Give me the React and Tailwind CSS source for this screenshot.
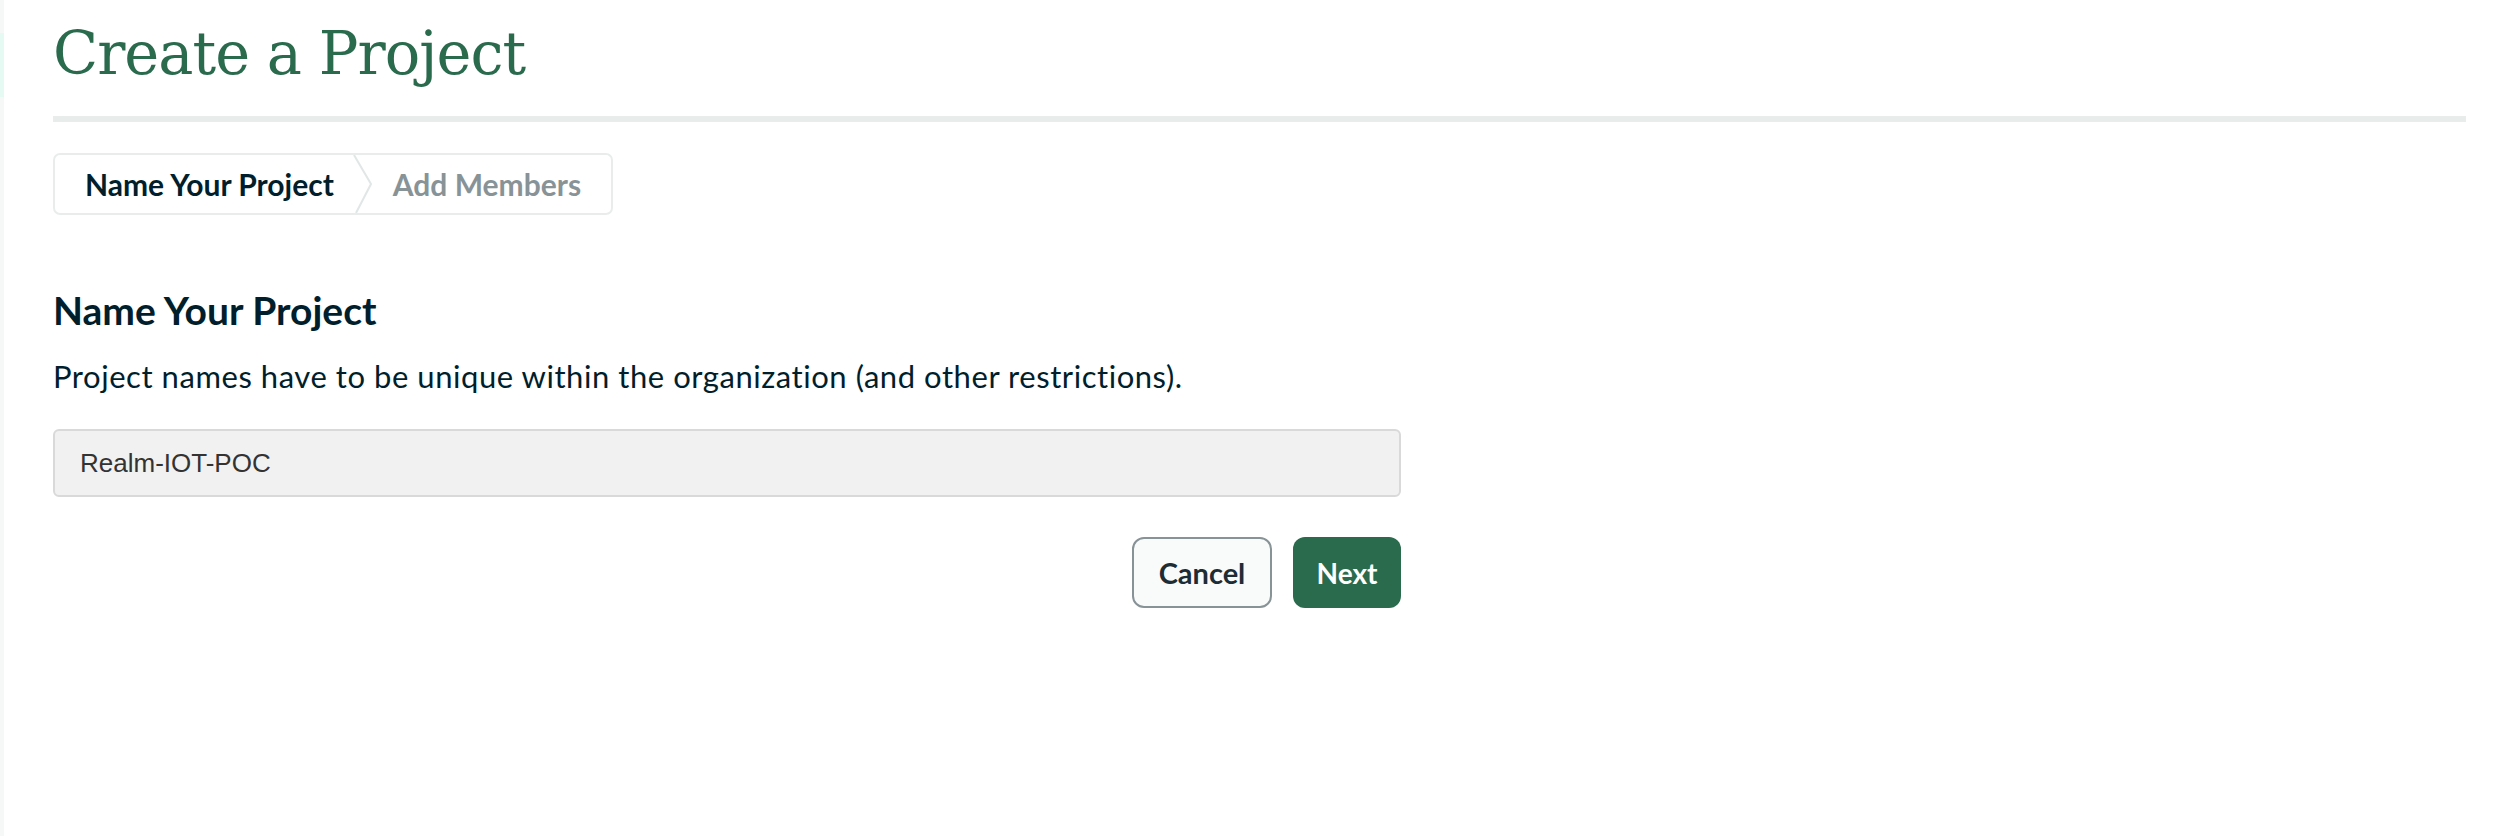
import React from "react";

export default function App() {
  return (
    <div className="flex min-h-[836px] w-full bg-white">
      <div className="flex w-[4px] shrink-0 flex-col">
        <div className="h-[33px] bg-[#f6f8f8]" />
        <div className="h-[64px] bg-[#e6faf4]" />
        <div className="flex-1 bg-[#f6f8f8]" />
      </div>
      <main className="flex-1 pl-[49px] pr-[50px]">
        <h1
          className="pt-[24px] text-[59px] leading-[59px] tracking-[-1px] text-[#2a6a4d]"
          style={{ fontFamily: '"DejaVu Serif", "Liberation Serif", serif' }}
        >
          Create a Project
        </h1>
        <div className="mt-[33px] h-[6px] bg-[#e8edeb]" />

        <div
          className="mt-[31px] inline-flex h-[62px] items-stretch rounded-[7px] border-2 border-[#e8edeb]"
          style={{ fontFamily: 'Lato, "Noto Sans", sans-serif' }}
        >
          <div className="flex items-center pl-[30px] pr-[19px] text-[30px] font-bold text-[#001e2b]">
            Name Your Project
          </div>
          <svg width="20" height="58" viewBox="0 0 20 58" className="shrink-0">
            <polyline points="1,0 18,29 3,58" fill="none" stroke="#e1e6e6" strokeWidth="2" />
          </svg>
          <div className="flex items-center pl-[20px] pr-[30px] text-[30px] font-bold text-[#889397]">
            Add Members
          </div>
        </div>

        <section className="w-[1348px]" style={{ fontFamily: 'Lato, "Noto Sans", sans-serif' }}>
          <h2 className="mt-[73px] text-[39px] font-bold leading-[44px] text-[#001e2b]">
            Name Your Project
          </h2>
          <p className="mt-[24px] text-[31px] leading-[40px] tracking-[0.55px] text-[#001e2b]">
            Project names have to be unique within the organization (and other restrictions).
          </p>
          <div className="mt-[33px] flex h-[68px] items-center rounded-[6px] border-2 border-[#d9d9d9] bg-[#f1f1f1] pl-[25px]">
            <input
              readOnly
              value="Realm-IOT-POC"
              className="w-full bg-transparent text-[26px] text-[#333333] outline-none"
              style={{ fontFamily: '"Liberation Sans", Arial, sans-serif' }}
            />
          </div>
          <div className="mt-[40px] flex justify-end gap-[21px]">
            <button className="h-[71px] w-[140px] rounded-[12px] border-2 border-[#889397] bg-[#f9fbfa] text-[29px] font-bold text-[#1c2d38]">
              Cancel
            </button>
            <button className="h-[71px] w-[108px] rounded-[12px] bg-[#2a6a4d] text-[28px] font-bold text-white">
              Next
            </button>
          </div>
        </section>
      </main>
    </div>
  );
}
